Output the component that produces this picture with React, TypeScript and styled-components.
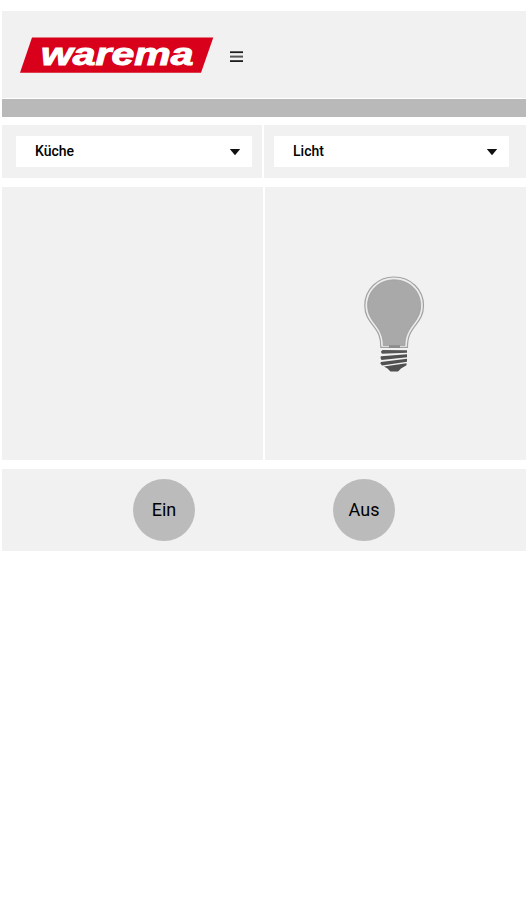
import React from "react";
import styled, { createGlobalStyle } from "styled-components";

const GlobalStyle = createGlobalStyle`
  * { box-sizing: border-box; }
  body { margin: 0; background: #fff; color: #000; font-family: Roboto, sans-serif; }
  button { font: inherit; color: inherit; border: 0; padding: 0; cursor: pointer; }
`;

const Page = styled.main`
  width: 527px;
  min-height: 900px;
  padding: 11px 1px 0 2px;
`;

const Header = styled.header`
  height: 87px;
  display: flex;
  align-items: center;
  gap: 16px;
  padding: 1px 0 0 18px;
  background: #f1f1f1;
`;

const Logo = styled.svg`
  display: block;
  width: 194px;
  height: 36px;
`;

const MenuButton = styled.button`
  display: grid;
  width: 14px;
  height: 12px;
  margin-top: 4px;
  background: none;
`;

const Strip = styled.div`
  height: 18px;
  margin-top: 1px;
  background: #b9b9b9;
`;

const SelectorRow = styled.div`
  display: grid;
  grid-template-columns: 260px 262px;
  gap: 2px;
  margin-top: 8px;
`;

const SelectorCell = styled.div<{ $start: number }>`
  height: 53px;
  padding: 11px 0 0 ${(p) => p.$start}px;
  background: #f1f1f1;
`;

const Select = styled.button<{ $width: number }>`
  display: flex;
  align-items: center;
  justify-content: space-between;
  width: ${(p) => p.$width}px;
  height: 31px;
  padding: 0 11px 2px 19px;
  background: #fff;
  font-size: 14px;
  font-weight: 500;
`;

const SelectText = styled.span`
  line-height: 16px;
`;

const Arrow = styled.svg`
  display: block;
  width: 12px;
  height: 8px;
  margin-top: 3px;
`;

const PanelRow = styled.div`
  display: grid;
  grid-template-columns: 261px 261px;
  gap: 2px;
  margin-top: 9px;
`;

const Panel = styled.section`
  height: 273px;
  padding: 87px 0 0 97px;
  background: #f1f1f1;
`;

const BulbIcon = styled.svg`
  display: block;
  width: 64px;
  height: 100px;
`;

const Footer = styled.footer`
  display: flex;
  align-items: flex-start;
  gap: 138px;
  height: 82px;
  margin-top: 9px;
  padding: 10px 0 0 131px;
  background: #f1f1f1;
`;

const RoundButton = styled.button`
  width: 62px;
  height: 62px;
  padding-bottom: 1px;
  border-radius: 50%;
  background: #bbb;
  font-size: 18px;
`;

function WaremaLogo() {
  return (
    <Logo viewBox="0 0 194 36" role="img" aria-label="warema">
      <path d="M12 .5H193.3L181 35.7H0Z" fill="#d8001a" />
      <text
        x="21"
        y="28"
        fill="#fff"
        stroke="#fff"
        strokeWidth="1"
        fontFamily="Liberation Sans, sans-serif"
        fontSize="31"
        fontWeight="700"
        fontStyle="italic"
        textLength="152.5"
        lengthAdjust="spacingAndGlyphs"
      >
        warema
      </text>
    </Logo>
  );
}

function MenuIcon() {
  return (
    <svg width="14" height="12" viewBox="0 0 14 12">
      <path d="M0 1.2H13" stroke="#1c1c1c" strokeWidth="1.8" />
      <path d="M0 5.6H13" stroke="#555" strokeWidth="2" />
      <path d="M0 10.1H13" stroke="#1c1c1c" strokeWidth="1.8" />
    </svg>
  );
}

function Dropdown({ text, width }: { text: string; width: number }) {
  return (
    <Select $width={width}>
      <SelectText>{text}</SelectText>
      <Arrow viewBox="0 0 12 8">
        <path d="M.8 1H11.2L6 7.2Z" fill="#111" />
      </Arrow>
    </Select>
  );
}

function Bulb() {
  return (
    <BulbIcon viewBox="0 0 64 100">
      <path
        d="M32 3C15.8 3 2.8 15.5 2.8 31.5C2.8 46.500 12.5 50 17 61C18.5 65 18.8 69 18.800 73.3H45.5C45.5 68 45.8 65 47.500 61C52 50 61.5 46.5 61.5 31.5C61.5 15.5 48.5 3 32 3Z"
        fill="#ececec"
        stroke="#a2a2a2"
        strokeWidth="1.2"
      />
      <path
        d="M32 5.8C17 5.8 5.6 17 5.6 31.500C5.6 45 15 49.5 19.2 60C20.7 64 21.2 67 21.3 71.5H43C43 67 43.5 64 45.1 60C49.5 49.5 58.7 45 58.700 31.5C58.7 17 47 5.8 32 5.8Z"
        fill="#a9a9a9"
        stroke="#999"
        strokeWidth=".7"
      />
      <path d="M27 71.2H38V74H27Z" fill="#8c8c8c" />
      <path d="M20.500 76L45 76.300V78.800L20 79.800L18.800 77.800Z" fill="#555" />
      <path d="M18.800 82.300L45 80.200V83.300L19.500 86L18.500 84Z" fill="#505050" />
      <path d="M18.800 88L45 84.700V87.800L20 91.500L18.500 89.500Z" fill="#505050" />
      <path d="M22 92.500L44.500 89.300V91.300L39 94.500L36 97.500H28.500L25.500 94.500Z" fill="#505050" />
    </BulbIcon>
  );
}

export default function App() {
  return (
    <>
      <GlobalStyle />
      <Page>
        <Header>
          <WaremaLogo />
          <MenuButton aria-label="Menü">
            <MenuIcon />
          </MenuButton>
        </Header>
        <Strip />
        <SelectorRow>
          <SelectorCell $start={14}>
            <Dropdown text="Küche" width={236} />
          </SelectorCell>
          <SelectorCell $start={10}>
            <Dropdown text="Licht" width={235} />
          </SelectorCell>
        </SelectorRow>
        <PanelRow>
          <Panel />
          <Panel>
            <Bulb />
          </Panel>
        </PanelRow>
        <Footer>
          <RoundButton>Ein</RoundButton>
          <RoundButton>Aus</RoundButton>
        </Footer>
      </Page>
    </>
  );
}
